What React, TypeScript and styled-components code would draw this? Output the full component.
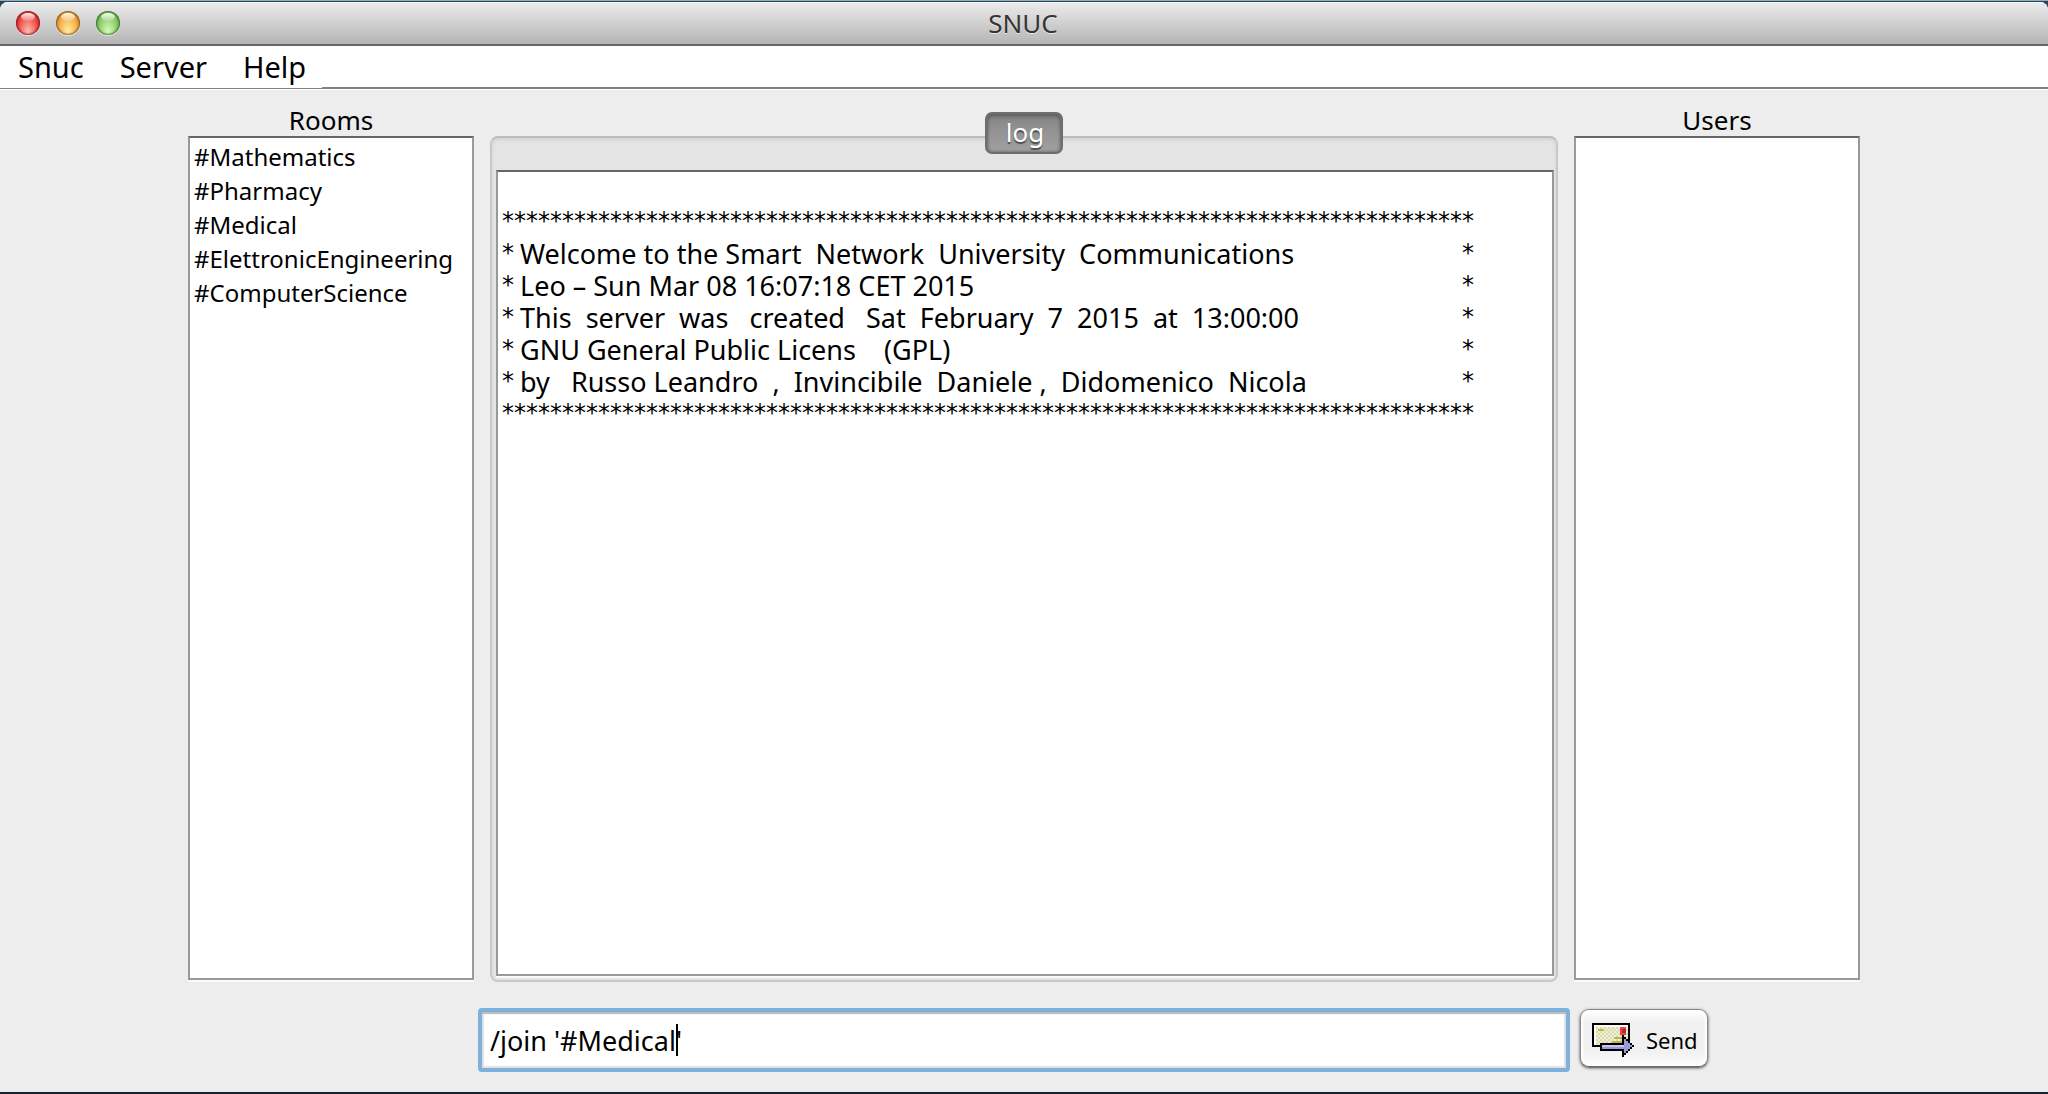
import React, { useLayoutEffect, useRef, useState } from 'react';
import styled, { createGlobalStyle } from 'styled-components';

const UI_FONT = '"Noto Sans", "Open Sans", sans-serif';

const GlobalStyle = createGlobalStyle`
  *, *::before, *::after { box-sizing: border-box; }
  body { margin: 0; background: #ededed; }
  button, input { font-family: inherit; }
`;

const Desktop = styled.div`
  display: flex;
  min-height: 100vh;
  background: linear-gradient(#8fabbf 0, #8fabbf 1px, #2d4557 1px, #3b5468 12px, #14202a 100%);
  padding: 2px 0;
  font-family: ${UI_FONT};
  color: #000;
`;

const Window = styled.div`
  flex: 1;
  display: flex;
  flex-direction: column;
  min-width: 0;
  background: #ededed;
  border-radius: 8px 8px 0 0;
  overflow: hidden;
`;

const TitleBar = styled.header`
  display: grid;
  grid-template-columns: 1fr auto 1fr;
  align-items: center;
  height: 44px;
  padding: 0 18px 0 16px;
  background: linear-gradient(#ececec, #d6d6d6 40%, #b4b4b4);
  border-bottom: 2px solid #666;
  box-shadow: inset 0 1px 0 #f8f8f8;
`;

const Lights = styled.div`
  display: flex;
  gap: 16px;
`;

const Light = styled.button<{ $rim: string; $base: string; $glow: string }>`
  position: relative;
  width: 24px;
  height: 24px;
  padding: 0;
  border: 0;
  border-radius: 50%;
  background: radial-gradient(ellipse at 50% 92%, ${p => p.$glow} 0, ${p => p.$base} 62%, ${p => p.$rim} 100%);
  box-shadow: inset 0 0 2px 1px ${p => p.$rim}, 0 1px 1px rgba(255, 255, 255, 0.7);

  &::after {
    content: '';
    position: absolute;
    left: 5px;
    right: 5px;
    top: 2px;
    height: 8px;
    border-radius: 50%;
    background: linear-gradient(rgba(255, 255, 255, 0.95), rgba(255, 255, 255, 0.15));
  }
`;

const Title = styled.h1`
  margin: 0;
  font-size: 26px;
  line-height: 36px;
  font-weight: 400;
  color: #353535;
  text-shadow: 0 1px 0 rgba(255, 255, 255, 0.6);
`;

const MenuBar = styled.nav`
  display: flex;
  height: 44px;
  background: linear-gradient(#808080, #808080) right bottom 1px / calc(100% - 322px) 2px no-repeat,
    linear-gradient(#808080, #808080) left bottom 1px / 322px 1px no-repeat, #fff;
`;

const MenuItem = styled.button`
  padding: 0 18px 2px;
  border: 0;
  background: none;
  font-size: 29px;
  line-height: 40px;
  color: #000;
`;

const Panels = styled.main`
  flex: 1;
  display: grid;
  grid-template-columns: 286px minmax(0, 1fr) 286px;
  gap: 16px;
  padding: 14px 188px 0;
`;

const Column = styled.section`
  display: flex;
  flex-direction: column;
`;

const Heading = styled.h2`
  margin: 0;
  height: 32px;
  font-size: 26px;
  line-height: 32px;
  font-weight: 400;
  text-align: center;
`;

const ListBox = styled.ul`
  flex: 1;
  margin: 0;
  padding: 2px 4px;
  list-style: none;
  background: #fff;
  border: 2px solid #999;
  border-top-color: #666;
  box-shadow: 0 2px 0 #fafafa;
`;

const Room = styled.li`
  font-size: 24px;
  line-height: 34px;
`;

const TabPane = styled.div`
  position: relative;
  flex: 1;
  display: flex;
  margin: 32px 0 -2px;
  padding: 32px 2px 4px 4px;
  background: #e4e4e4;
  border: 2px solid #c8c8c8;
  border-top-color: #bcbcbc;
  border-radius: 8px;
  box-shadow: inset 0 2px 3px #d2d2d2;
`;

const Tab = styled.button`
  position: absolute;
  top: -26px;
  left: 50%;
  transform: translateX(-50%);
  width: 78px;
  height: 42px;
  padding: 0 0 2px 2px;
  border: 2px solid #6e6e6e;
  border-radius: 7px;
  background: linear-gradient(#828282, #929292 40%, #a0a0a0);
  box-shadow: inset 0 2px 4px #5c5c5c, inset 0 0 3px #6a6a6a;
  font-size: 26px;
  line-height: 34px;
  color: #fff;
  text-shadow: 0 2px 1px #4a4a4a;
`;

const Log = styled.div`
  flex: 1;
  padding: 0 4px;
  background: #fff;
  border: 2px solid #999;
  border-top-color: #666;
  box-shadow: 0 2px 0 #fafafa;
`;

const Banner = styled.div`
  width: fit-content;
  padding-top: 34px;
  font-size: 27px;
  line-height: 32px;
  white-space: pre;
`;

const BannerRow = styled.div`
  display: flex;
  gap: 6px;
  height: 32px;
`;

const Stars = styled.span`
  font-family: "DejaVu Sans", sans-serif;
  font-size: 24px;
  line-height: 30px;

  &:last-child:not(:first-child) {
    margin-left: auto;
  }
`;

const Composer = styled.form`
  display: flex;
  align-items: center;
  gap: 10px;
  padding: 28px 340px 20px 478px;
`;

const InputWrap = styled.div`
  position: relative;
  flex: 1;
  display: flex;
`;

const MessageInput = styled.input`
  flex: 1;
  min-width: 0;
  height: 64px;
  padding: 0 8px;
  border: 4px solid #7fb0dc;
  border-radius: 4px;
  outline: 0;
  background: #fff;
  box-shadow: inset 0 2px 1px #b9bcc0, inset 0 0 1px 2px #e2e2e2;
  font-size: 27px;
  color: #000;
  caret-color: transparent;
`;

const Caret = styled.span`
  position: absolute;
  top: 16px;
  width: 2px;
  height: 32px;
  background: #000;
`;

const SendButton = styled.button`
  display: flex;
  align-items: center;
  gap: 12px;
  width: 128px;
  height: 58px;
  padding: 4px 0 0 11px;
  margin-bottom: 4px;
  border: 1px solid #8a8a8a;
  border-bottom-color: #6a6a6a;
  border-radius: 9px;
  background: linear-gradient(#fff, #f1f1f1 22%, #f0f0f0 70%, #fcfcfc);
  box-shadow: 0 1px 3px rgba(0, 0, 0, 0.75), inset 0 0 3px 2px #fff;
  font-size: 22px;
  color: #000;
`;

function EnvelopeIcon() {
  return (
    <svg width="42" height="34" viewBox="0 0 21 17" shapeRendering="crispEdges" aria-hidden="true">
      <defs>
        <pattern id="dither" width="2" height="2" patternUnits="userSpaceOnUse">
          <rect width="2" height="2" fill="#eeeeda" />
          <rect width="1" height="1" fill="#dcdcaa" />
          <rect x="1" y="1" width="1" height="1" fill="#dcdcaa" />
        </pattern>
      </defs>
      <rect width="19" height="12" fill="#000" />
      <rect x="1" y="1" width="17" height="10" fill="#fbfbf2" />
      <rect x="2" y="2" width="16" height="9" fill="url(#dither)" />
      <path d="M3 3h3v1h-3zM11 7h4v1h-4zM10 9h5v1h-5z" fill="#bdb64c" />
      <rect x="14" y="2" width="3" height="4" fill="#e8474d" />
      <rect x="15" y="3" width="2" height="2" fill="#b52a33" />
      <path
        d="M4 10h11V6h1v1h1v1h1v1h1v1h1v1h1v1h-1v1h-1v1h-1v1h-1v1h-1v1h-1v-3H4z"
        fill="#000"
      />
      <path d="M5 11h11V8h1v1h1v1h1v1h1v1h-1v1h-1v1h-1v1h-1v-2H5z" fill="#9c9cd4" />
      <path d="M5 11h11v1H5z" fill="#c6c6f2" />
    </svg>
  );
}

const rooms = ['#Mathematics', '#Pharmacy', '#Medical', '#ElettronicEngineering', '#ComputerScience'];

const bannerLines = [
  'Welcome to the Smart  Network  University  Communications',
  'Leo – Sun Mar 08 16:07:18 CET 2015',
  'This  server  was   created   Sat  February  7  2015  at  13:00:00',
  'GNU General Public Licens    (GPL)',
  'by   Russo Leandro  ,  Invincibile  Daniele ,  Didomenico  Nicola',
];

const rule = '*'.repeat(81);

export default function App() {
  const inputRef = useRef<HTMLInputElement>(null);
  const [message, setMessage] = useState("/join '#Medical'");
  const [caretIndex, setCaretIndex] = useState(message.length - 1);
  const [caretX, setCaretX] = useState(0);

  useLayoutEffect(() => {
    const input = inputRef.current;
    const context = document.createElement('canvas').getContext('2d');
    if (!input || !context) return;
    const style = getComputedStyle(input);
    context.font = `${style.fontSize} ${style.fontFamily}`;
    const start = parseFloat(style.paddingLeft) + parseFloat(style.borderLeftWidth);
    setCaretX(Math.round(start + context.measureText(message.slice(0, caretIndex)).width));
  }, [message, caretIndex]);

  return (
    <>
      <GlobalStyle />
      <Desktop>
        <Window>
          <TitleBar>
            <Lights>
              <Light aria-label="Close" $rim="#8e1c1c" $base="#ee4642" $glow="#ffc4bc" />
              <Light aria-label="Minimize" $rim="#93591a" $base="#f2a940" $glow="#fff3a8" />
              <Light aria-label="Zoom" $rim="#3f7429" $base="#86c864" $glow="#dcffc0" />
            </Lights>
            <Title>SNUC</Title>
          </TitleBar>
          <MenuBar>
            <MenuItem>Snuc</MenuItem>
            <MenuItem>Server</MenuItem>
            <MenuItem>Help</MenuItem>
          </MenuBar>
          <Panels>
            <Column>
              <Heading>Rooms</Heading>
              <ListBox>
                {rooms.map(room => (
                  <Room key={room}>{room}</Room>
                ))}
              </ListBox>
            </Column>
            <Column>
              <TabPane>
                <Tab>log</Tab>
                <Log>
                  <Banner>
                    <BannerRow><Stars>{rule}</Stars></BannerRow>
                    {bannerLines.map(line => (
                      <BannerRow key={line}>
                        <Stars>*</Stars>
                        <span>{line}</span>
                        <Stars>*</Stars>
                      </BannerRow>
                    ))}
                    <BannerRow><Stars>{rule}</Stars></BannerRow>
                  </Banner>
                </Log>
              </TabPane>
            </Column>
            <Column>
              <Heading>Users</Heading>
              <ListBox />
            </Column>
          </Panels>
          <Composer onSubmit={e => e.preventDefault()}>
            <InputWrap>
              <MessageInput
                ref={inputRef}
                aria-label="Message"
                value={message}
                onChange={e => setMessage(e.target.value)}
                onSelect={e => setCaretIndex(e.currentTarget.selectionStart ?? 0)}
              />
              <Caret style={{ left: caretX }} />
            </InputWrap>
            <SendButton type="submit">
              <EnvelopeIcon />
              Send
            </SendButton>
          </Composer>
        </Window>
      </Desktop>
    </>
  );
}
